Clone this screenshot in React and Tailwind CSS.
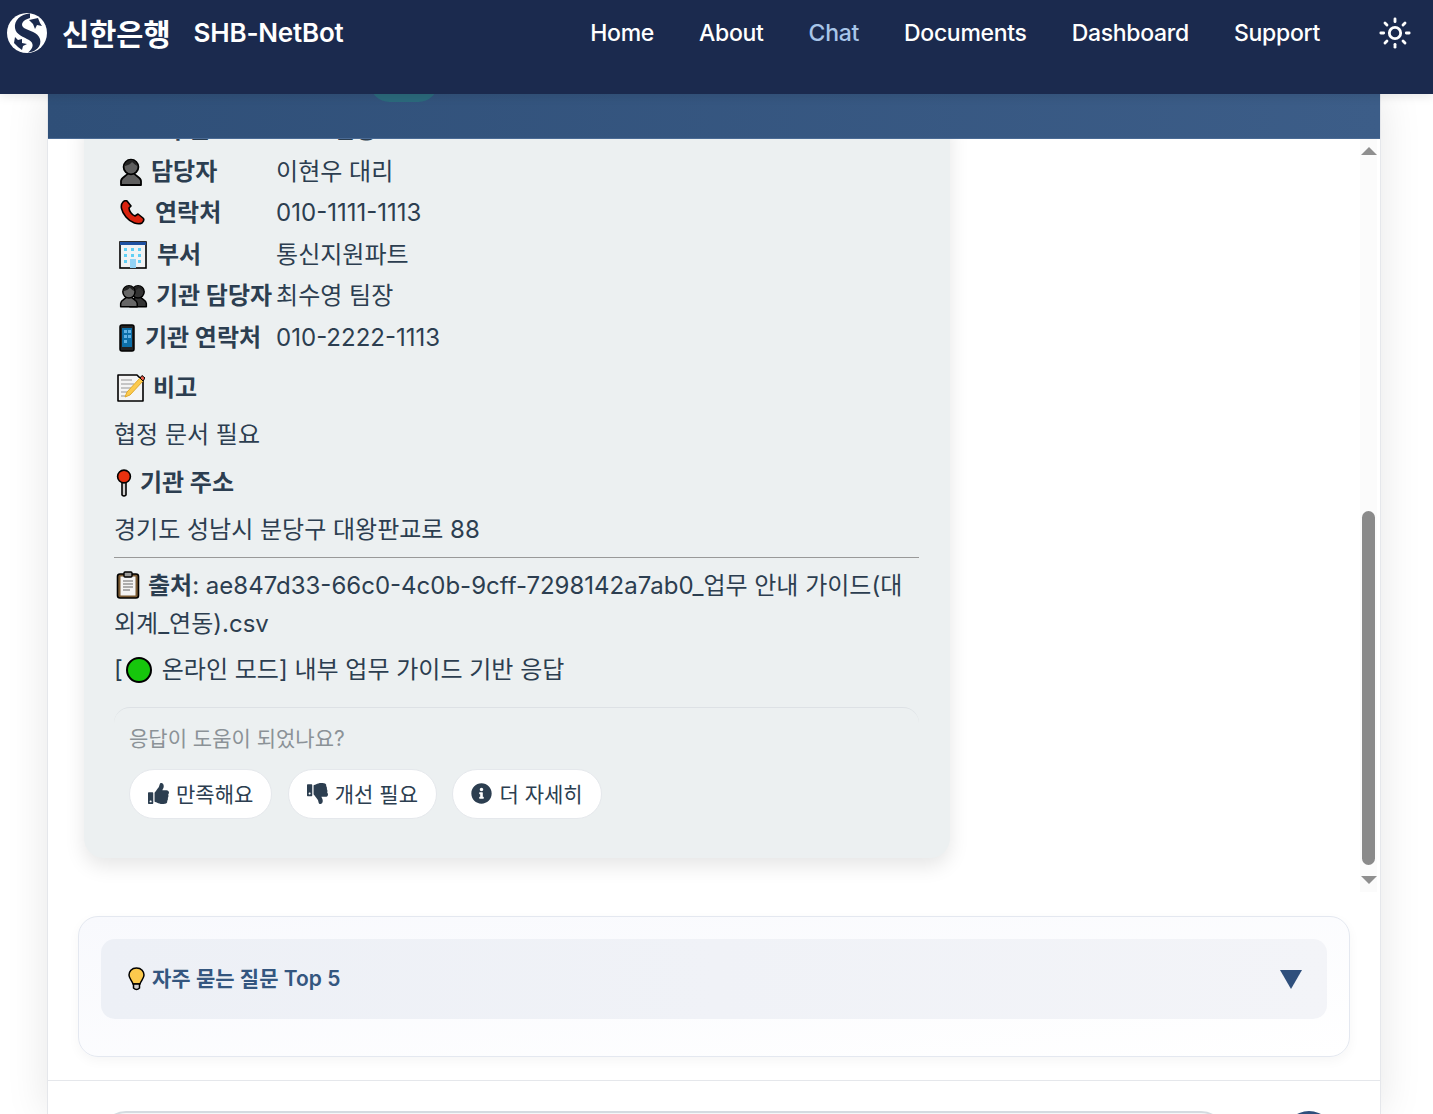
import React from "react";
import { Sun } from "lucide-react";
import { FaThumbsUp, FaThumbsDown, FaInfoCircle } from "react-icons/fa";

const Logo = () => (
  <svg width="40" height="40" viewBox="0 0 40 40">
    <circle cx="20" cy="20" r="20" fill="#fff" />
    <path d="M23 0.5 C13 1 7 8 8 15 C9 22 17 24 22 27 C27 30 27 35 21 39.5 C29 39 35 33 33 26 C31 19 22 18 17 15 C13 12 15 7 23 5 Z" fill="#1b2a4e" />
    <path d="M22 7 L31 5 L33 10 L35 13 L30 12 L28 16 L26 11 Z" fill="#1b2a4e" />
    <path d="M8 24 L11 27 L15 26 L15 30 L20 31 L16 33 L15 37 L11 34 L7 30 Z" fill="#1b2a4e" />
  </svg>
);

const Person = ({ x = 0, fill = "#5f5f5f" }) => (
  <g transform={`translate(${x} 0)`}>
    <path d="M2 27 V23 C2 19 8 18 9 15 H15 C16 18 22 19 22 23 V27 Z" fill={fill} stroke="#000" strokeWidth="1.8" strokeLinejoin="round" />
    <circle cx="12" cy="9" r="7.4" fill={fill} stroke="#000" strokeWidth="1.8" />
    <path d="M6 8 C9 7 12 6 13 4 C15 6 17 7 18 8 C18 4 15 2 12 2 C9 2 6 4 6 8 Z" fill="#222" />
  </g>
);

const PersonIcon = () => (
  <svg width="24" height="28" viewBox="0 0 24 28"><Person /></svg>
);

const PeopleIcon = () => (
  <svg width="29" height="24" viewBox="0 0 35 28">
    <Person x={11} fill="#333" />
    <Person x={0} fill="#666" />
  </svg>
);

const PhoneIcon = () => (
  <svg width="26" height="26" viewBox="0 0 26 26">
    <path d="M4 2 C1 5 2 11 7 17 C12 23 19 25 23 23 C25 21 25 19 24 18 L19 14 L16 16 C13 15 10 11 10 8 L12 6 L8 1 C7 0.5 5 1 4 2 Z" fill="#d9230f" stroke="#000" strokeWidth="1.6" strokeLinejoin="round" />
  </svg>
);

const BuildingIcon = () => (
  <svg width="28" height="28" viewBox="0 0 28 28">
    <rect x="1" y="1" width="26" height="26" fill="#f1f3f4" stroke="#000" strokeWidth="1.6" />
    <rect x="1" y="1" width="26" height="3" fill="#1e50a0" />
    <g fill="#61d0f5">
      <rect x="5" y="7" width="3" height="3" /><rect x="12" y="7" width="3" height="3" /><rect x="19" y="7" width="3" height="3" />
      <rect x="5" y="13" width="3" height="3" /><rect x="12" y="13" width="3" height="3" /><rect x="19" y="13" width="3" height="3" />
      <rect x="5" y="19" width="3" height="3" /><rect x="19" y="19" width="3" height="3" />
      <rect x="11" y="18" width="6" height="9" fill="#92d3f5" />
    </g>
  </svg>
);

const MobileIcon = () => (
  <svg width="16" height="28" viewBox="0 0 16 28">
    <rect x="1" y="1" width="14" height="26" rx="2" fill="#222" stroke="#000" strokeWidth="1.5" />
    <rect x="3" y="4" width="10" height="19" fill="#0e6fa8" />
    <g fill="#61b2e4">
      <rect x="5" y="6" width="3" height="3" /><rect x="9" y="6" width="3" height="3" />
      <rect x="5" y="11" width="3" height="3" /><rect x="9" y="11" width="3" height="3" />
      <rect x="5" y="16" width="3" height="3" />
    </g>
  </svg>
);

const MemoIcon = () => (
  <svg width="28" height="28" viewBox="0 0 28 28">
    <path d="M1 1 H20 L26 7 V27 H1 Z" fill="#f4f4f4" stroke="#000" strokeWidth="1.6" strokeLinejoin="round" />
    <path d="M4 6 H15 M4 10 H17 M4 14 H14 M4 18 H10 M4 22 H9" stroke="#b5b5b5" strokeWidth="1.3" />
    <path d="M8 23 L10 18 L23 4 L26 7 L13 21 Z" fill="#fcca4d" stroke="#e0a92c" strokeWidth="1" />
    <path d="M23 4 L25 1.5 L28 4 L26 7 Z" fill="#ea5a47" stroke="#000" strokeWidth="1" />
  </svg>
);

const PinIcon = () => (
  <svg width="16" height="28" viewBox="0 0 16 28">
    <path d="M6 13 H10 V26 Q8 28 6 26 Z" fill="#d0cfce" stroke="#000" strokeWidth="1.6" strokeLinejoin="round" />
    <circle cx="8" cy="7.5" r="6.4" fill="#e8310e" stroke="#000" strokeWidth="1.6" />
  </svg>
);

const ClipboardIcon = () => (
  <svg width="24" height="28" viewBox="0 0 24 28">
    <rect x="1.5" y="3" width="21" height="24" rx="2.5" fill="#7a5a32" stroke="#000" strokeWidth="1.6" />
    <rect x="4.5" y="5.5" width="15" height="19" fill="#f4f4f4" />
    <path d="M7 10 H17 M7 13 H17 M7 16 H17 M7 19 H14" stroke="#666" strokeWidth="1.2" />
    <rect x="8" y="1" width="8" height="5" rx="1" fill="#9b9b9a" stroke="#000" strokeWidth="1.4" />
  </svg>
);

const BulbIcon = () => (
  <svg width="17" height="24" viewBox="0 0 17 24">
    <path d="M8.5 1 C3.5 1 1 4.5 1 8 C1 11.5 4 13.5 5 17 H12 C13 13.5 16 11.5 16 8 C16 4.5 13.5 1 8.5 1 Z" fill="#fcca4d" stroke="#000" strokeWidth="1.5" />
    <path d="M5.5 17 H11.5 V21 Q8.5 24 5.5 21 Z" fill="#d0cfce" stroke="#000" strokeWidth="1.5" />
  </svg>
);

// first row sits under the header, only the bottoms of its glyphs show
const rows = [
  { icon: <span className="inline-block w-[48px]" />, label: "구분", value: "연동", valueClass: "pl-[57px]" },
  { icon: <PersonIcon />, label: "담당자", value: "이현우 대리", gap: "gap-[8px]" },
  { icon: <PhoneIcon />, label: "연락처", value: "010-1111-1113", gap: "gap-[10px]" },
  { icon: <BuildingIcon />, label: "부서", value: "통신지원파트", gap: "gap-[10px]" },
  { icon: <PeopleIcon />, label: "기관 담당자", value: "최수영 팀장", gap: "gap-[8px]" },
  { icon: <MobileIcon />, label: "기관 연락처", value: "010-2222-1113", gap: "gap-[10px]" },
];

const navItems = ["Home", "About", "Chat", "Documents", "Dashboard", "Support"];

function InfoTable() {
  return (
    <table className="border-collapse">
      <tbody>
        {rows.map((row) => (
          <tr key={row.label} className="h-[41.5px]">
            <td className="w-[162px] pl-[5px] pr-[4px] whitespace-nowrap">
              <div className={`flex items-center font-bold ${row.gap || "gap-0"}`}>
                {row.icon}
                <span>{row.label}</span>
              </div>
            </td>
            <td className={`whitespace-nowrap ${row.valueClass || ""}`}>{row.value}</td>
          </tr>
        ))}
      </tbody>
    </table>
  );
}

function FeedbackButton({ icon, children }) {
  return (
    <button className="h-[50px] px-[18px] pt-[3px] flex items-center gap-[7px] rounded-full bg-white border border-[#e5e8ec] text-[#2c3e50] text-[21px]">
      {icon}
      {children}
    </button>
  );
}

export default function App() {
  return (
    <div
      className="relative h-[1114px] overflow-hidden bg-white text-[#2c3e50]"
      style={{ fontFamily: 'Inter, "Noto Sans CJK KR", sans-serif' }}
    >
      {/* Navbar */}
      <nav className="relative z-20 h-[94px] bg-[#1b2a4e] flex items-start pt-[13px] pl-[7px] pr-[21px] text-white shadow-[0_2px_10px_rgba(0,0,0,0.1)]">
        <Logo />
        <span className="ml-[15px] mt-[1px] text-[29.5px] font-bold leading-[40px]">신한은행</span>
        <span className="ml-[23px] text-[26px] font-semibold leading-[40px] tracking-[-0.2px]">SHB-NetBot</span>
        <ul className="ml-auto flex items-center h-[40px] gap-[45px] text-[23px] font-medium tracking-[-0.3px]">
          {navItems.map((item) => (
            <li key={item} className={item === "Chat" ? "text-[#a8c5e8]" : ""}>{item}</li>
          ))}
        </ul>
        <Sun size={34} strokeWidth={2} className="ml-[58px] mt-[3px]" />
      </nav>

      {/* Chat card */}
      <main className="relative ml-[47px] w-[1334px] h-[1020px] bg-white border-x border-[#e5e7eb] shadow-[0_0_40px_rgba(0,0,0,0.1)] flex flex-col">
        {/* Header, mostly behind the navbar */}
        <header className="h-[45px] shrink-0 overflow-hidden bg-gradient-to-r from-[#2f4f78] to-[#3c5d88] border-b border-[#4a6a94]">
          <div className="flex -mt-[31px] h-[36px] items-end pl-[31px] text-white text-[26px] font-semibold">
            <span>네트워크 업무 챗봇 응답</span>
            <span className="ml-[32px] w-[68px] h-[39px] -mb-[3px] rounded-full bg-[#2b6a7c]" />
          </div>
        </header>

        {/* Messages */}
        <section className="h-[753px] shrink-0 flex overflow-hidden">
          <div className="flex-1 pl-[36px] -mt-[29.4px]">
            <div className="w-[866px] h-[748px] bg-[#ecf0f1] rounded-[20px] shadow-[0_8px_20px_rgba(0,0,0,0.1)] pl-[30px] pr-[31px] text-[24px] font-normal">
              <InfoTable />
              <h4 className="mt-[9px] flex items-center gap-[8px] pl-[3px] font-bold h-[41px]"><MemoIcon />비고</h4>
              <p className="mt-[5px] leading-[41px]">협정 문서 필요</p>
              <h4 className="mt-[8px] flex items-center gap-[8px] pl-[2px] font-bold h-[41px]"><PinIcon />기관 주소</h4>
              <p className="mt-[5px] leading-[41px]">경기도 성남시 분당구 대왕판교로 88</p>
              <hr className="mt-[7px] border-[#999]" />
              <p className="mt-[9px] leading-[38px]">
                <span className="inline-block align-[-5px] ml-[2px] mr-[8px]"><ClipboardIcon /></span>
                <b>출처</b>: ae847d33-66c0-4c0b-9cff-7298142a7ab0_업무 안내 가이드(대외계_연동).csv
              </p>
              <p className="mt-[8px] leading-[38px] flex items-center">
                [<span className="inline-block w-[26px] h-[26px] rounded-full bg-[#16c60c] border-2 border-black ml-[3px]" />
                <span className="ml-[10px]">온라인 모드] 내부 업무 가이드 기반 응답</span>
              </p>
              <div className="mt-[18px] pt-[14px] px-[15px] border-t border-[#dde1e5] rounded-t-[16px]">
                <p className="text-[21px] text-[#8b9297] leading-[34px]">응답이 도움이 되었나요?</p>
                <div className="mt-[13px] flex gap-[15.5px]">
                  <FeedbackButton icon={<FaThumbsUp size={21} className="-mt-[3px]" />}>만족해요</FeedbackButton>
                  <FeedbackButton icon={<FaThumbsDown size={21} className="-mt-[3px]" />}>개선 필요</FeedbackButton>
                  <FeedbackButton icon={<FaInfoCircle size={21} className="-mt-[3px]" />}>더 자세히</FeedbackButton>
                </div>
              </div>
            </div>
          </div>

          {/* Scrollbar */}
          <div className="w-[17px] mr-[3px] shrink-0 bg-[#fbfbfb] flex flex-col items-center pt-[8px]">
            <div className="w-0 h-0 border-x-[8px] border-x-transparent border-b-[8px] border-b-[#8f8f8f]" />
            <div className="mt-[356px] w-[13px] h-[354px] rounded-full bg-[#8a8a8a]" />
            <div className="mt-[11px] w-0 h-0 border-x-[8px] border-x-transparent border-t-[8px] border-t-[#8f8f8f]" />
          </div>
        </section>

        {/* FAQ */}
        <section className="px-[30px] pt-[24px] pb-[23px] border-b border-[#e5e7eb]">
          <div className="h-[141px] rounded-[20px] border border-[#e4e8f0] bg-gradient-to-br from-[#f8f9fd] to-white shadow-[0_4px_12px_rgba(0,0,0,0.04)] p-[22px]">
            <div className="h-[80px] rounded-[14px] bg-gradient-to-r from-[#edf0f6] to-[#f3f4f8] flex items-center pl-[27px] pr-[25px]">
              <BulbIcon />
              <span className="ml-[7px] text-[21px] font-semibold text-[#34567f]">자주 묻는 질문 Top 5</span>
              <span className="ml-auto w-0 h-0 border-x-[11px] border-x-transparent border-t-[19px] border-t-[#2f4f7c]" />
            </div>
          </div>
        </section>

        {/* Input */}
        <section className="flex items-start pl-[53px] pt-[30px]">
          <div className="w-[1125px] h-[50px] rounded-full border-2 border-[#d5dbe0] bg-[#f5f7f8]" />
          <div className="ml-[58px] w-[50px] h-[50px] rounded-full bg-[#2f4f7c]" />
        </section>
      </main>
    </div>
  );
}
